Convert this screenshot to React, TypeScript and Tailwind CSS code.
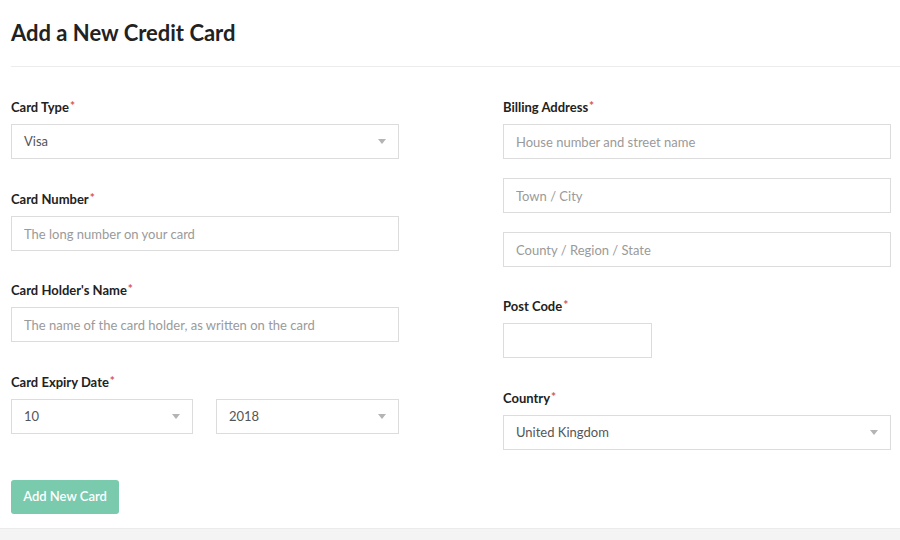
import type { ReactElement } from "react";

const font = { fontFamily: "Lato, 'Noto Sans', sans-serif" };
const boxClass = "h-[35px] w-full border border-[#dcdcdc] bg-white px-3 text-[13px] text-[#555] outline-none";
const placeholderClass = "placeholder:text-[#9a9a9a]";

function Label({ text }: { readonly text: string }): ReactElement {
  return (
    <p className="mb-2 h-[18px] text-[13px] font-bold leading-[18px] text-[#222]">
      {text}
      <span className="relative -top-[2px] ml-px text-[12px] text-[#d9534f]">*</span>
    </p>
  );
}

function Caret(): ReactElement {
  return (
    <svg className="absolute right-[13px] top-[15px]" width="8" height="5" viewBox="0 0 8 5">
      <path d="M0 0h8L4 5z" fill="#b4b4b4" />
    </svg>
  );
}

function Select({ value, className = "" }: { readonly value: string; readonly className?: string }): ReactElement {
  return (
    <div className={`relative ${className}`}>
      <div className={`${boxClass} flex items-center`}>{value}</div>
      <Caret />
    </div>
  );
}

function Input({ placeholder = "", className = "" }: { readonly placeholder?: string; readonly className?: string }): ReactElement {
  return <input className={`${boxClass} ${placeholderClass} ${className}`} placeholder={placeholder} style={font} />;
}

export default function App(): ReactElement {
  return (
    <div className="flex h-[540px] w-[900px] flex-col bg-white" style={font}>
      <div className="flex-1 pl-[11px]">
        <h1 className="pt-[20px] text-[22px] font-bold leading-[26px] text-[#222]">Add a New Credit Card</h1>
        <div className="mt-[20px] h-px bg-[#ececec]" />

        <div className="mt-[31px] flex gap-[104px] pr-[9px]">
          <div className="w-[388px] shrink-0">
            <Label text="Card Type" />
            <Select value="Visa" />

            <div className="mt-[31px]">
              <Label text="Card Number" />
              <Input placeholder="The long number on your card" />
            </div>

            <div className="mt-[30px]">
              <Label text="Card Holder's Name" />
              <Input placeholder="The name of the card holder, as written on the card" />
            </div>

            <div className="mt-[31px]">
              <Label text="Card Expiry Date" />
              <div className="flex justify-between">
                <Select value="10" className="w-[182px]" />
                <Select value="2018" className="w-[183px]" />
              </div>
            </div>

            <button
              type="button"
              className="mt-[46px] h-[34px] w-[108px] rounded-[3px] bg-[#7acaae] text-[13px] font-semibold text-white"
            >
              Add New Card
            </button>
          </div>

          <div className="w-[388px] shrink-0">
            <Label text="Billing Address" />
            <div className="flex flex-col gap-[19px]">
              <Input placeholder="House number and street name" />
              <Input placeholder="Town / City" />
              <Input placeholder="County / Region / State" />
            </div>

            <div className="mt-[30px]">
              <Label text="Post Code" />
              <Input className="!w-[149px]" />
            </div>

            <div className="mt-[31px]">
              <Label text="Country" />
              <Select value="United Kingdom" />
            </div>
          </div>
        </div>
      </div>
      <div className="h-[12px] border-t border-[#ebebeb] bg-[#f4f4f4]" />
    </div>
  );
}
